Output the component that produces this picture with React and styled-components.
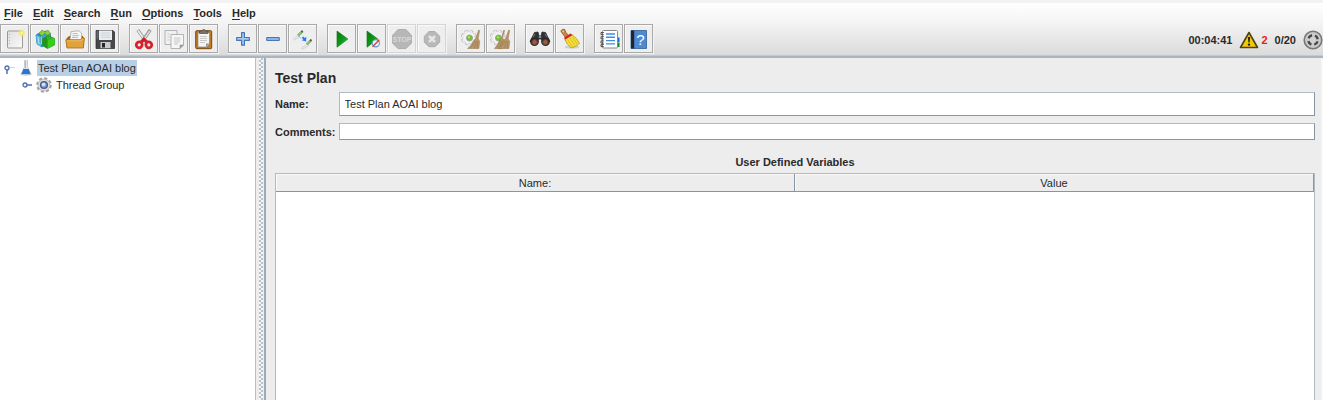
import React, { useState } from "react";
import styled, { createGlobalStyle } from "styled-components";

const menus = ["File", "Edit", "Search", "Run", "Options", "Tools", "Help"];

const NewIcon = () => (
  <svg width="22" height="22" viewBox="0 0 22 22">
    <defs>
      <linearGradient id="sheet" x1="0" y1="0" x2="1" y2="1">
        <stop offset="0" stopColor="#dedede" />
        <stop offset="1" stopColor="#fafafa" />
      </linearGradient>
      <radialGradient id="glow">
        <stop offset="0" stopColor="#fffde0" />
        <stop offset="0.45" stopColor="#f4e85c" />
        <stop offset="1" stopColor="#f4e85c" stopOpacity="0" />
      </radialGradient>
    </defs>
    <rect x="3.5" y="3" width="15" height="17" rx="0.8" fill="url(#sheet)" stroke="#999" />
    <path d="M5.5 6v.8M5.5 9v.8M5.5 12v.8M5.5 15v.8" stroke="#aaa" />
    <circle cx="17.6" cy="5" r="4" fill="url(#glow)" />
  </svg>
);

const TemplatesIcon = () => (
  <svg width="22" height="22" viewBox="0 0 22 22">
    <path d="M2 7 8 3.5 13 6v9l-5 4-5-3z" fill="#2590c2" stroke="#15689a" strokeWidth=".6" />
    <path d="M2 7l5 1.5V19l-4-3z" fill="#56bce0" />
    <path d="M6 6.5 11.5 3l5 2.5V15l-5 3-4-1.5z" fill="#3aa3cb" stroke="#126587" strokeWidth=".6" />
    <path d="M5 5.5 8 2l3 2 3-2 2.5 3.5-3.5 2-2-2.5-3 3z" fill="#8bd33c" stroke="#4f951e" strokeWidth=".6" />
    <path d="M9 11l5-3.5 6.5 3V17l-7 3.5L9 18z" fill="#36b51f" stroke="#168416" strokeWidth=".6" />
    <path d="M13.5 12.5l7-2.5v7l-7 3.5z" fill="#35cf1b" />
    <path d="M8.5 10l4-1 1 3.5v8L8 17z" fill="#22941b" />
    <path d="M4 9l1 7M7 8.5l.5 8" stroke="#c8f0fb" strokeWidth=".8" />
  </svg>
);

const OpenIcon = () => (
  <svg width="22" height="22" viewBox="0 0 22 22">
    <path d="M2.5 10.5 5 8h14l1 3v8H2.5z" fill="#9b661c" />
    <path d="M6 11 7.2 3.5 15 2.8l2.6 2.4V12H6z" fill="#f7f7f7" stroke="#999" strokeWidth=".7" />
    <path d="M8.5 5.8l5-.4M8.3 7.8l6.5-.4M8 9.6l6-.3" stroke="#aaa" strokeWidth=".8" />
    <path d="M1.8 11.8h14.8l1.2-1.7h2.7L19.3 20H3z" fill="#e2a23b" stroke="#a76b18" strokeWidth=".8" />
    <path d="M3 12.8h14l1.2-1.6h1" stroke="#f6c66b" fill="none" strokeWidth=".8" />
  </svg>
);

const SaveIcon = () => (
  <svg width="22" height="22" viewBox="0 0 22 22">
    <path d="M2 2.5h17l1.5 1.5v16.5H2z" fill="#45474a" stroke="#242628" strokeWidth=".7" />
    <rect x="5" y="2.5" width="13" height="9.5" fill="#e9edf0" />
    <path d="M7 5h9M7 7.2h9M7 9.4h9" stroke="#c6cdd4" strokeWidth=".8" />
    <path d="M2.5 3v9l2-2V3z" fill="#64686d" />
    <rect x="6.5" y="14" width="10" height="6.2" fill="#cacaca" />
    <rect x="8" y="15" width="3" height="4.5" fill="#272727" />
  </svg>
);

const CutIcon = () => (
  <svg width="22" height="22" viewBox="0 0 22 22" fill="none">
    <path d="M4.8 2 13.4 14.4" stroke="#999" strokeWidth="3.2" />
    <path d="M5 2.6 13.2 14.2" stroke="#eeeeee" strokeWidth="1.7" />
    <path d="M17.2 2 8.6 14.4" stroke="#888" strokeWidth="3.2" />
    <path d="M16.9 2.8 8.8 14.2" stroke="#dadada" strokeWidth="1.7" />
    <path d="m7.6 14.5 3.4-3.2 3.4 3.2" stroke="#cf1c28" strokeWidth="3" />
    <ellipse cx="6.2" cy="16.8" rx="2.9" ry="3" transform="rotate(25 6.2 16.8)" stroke="#d8202b" strokeWidth="2.8" />
    <ellipse cx="15.8" cy="16.8" rx="2.9" ry="3" transform="rotate(-25 15.8 16.8)" stroke="#d8202b" strokeWidth="2.8" />
  </svg>
);

const CopyIcon = () => (
  <svg width="22" height="22" viewBox="0 0 22 22">
    <g stroke="#a3a3a3" strokeWidth=".8">
      <path d="M2 2.5h12v14H2z" fill="#f0f0f0" />
      <path d="M8 6.5h12.5V17L17 20.5H8z" fill="#f6f6f6" />
      <path d="M20.5 17H17v3.5z" fill="#999" />
    </g>
    <path d="M4.5 6h2M4.5 9h2M4.5 12h2M11 10h6.5M11 12h6.5M11 14h6M11 16h4" stroke="#bcbcbc" strokeWidth=".8" />
  </svg>
);

const PasteIcon = () => (
  <svg width="22" height="22" viewBox="0 0 22 22">
    <rect x="2.7" y="2.7" width="16" height="18" rx="1" fill="#bd7b24" stroke="#784910" />
    <path d="M5 4.5h11.5V16l-3 3H5z" fill="#f4f4f2" stroke="#8e775b" strokeWidth=".6" />
    <path d="M16.5 15.5h-3.5V19z" fill="#999" />
    <path d="M7 8.5h7M7 10.5h7M7 12.5h7M7 14.5h5" stroke="#bbb" strokeWidth=".8" />
    <path d="M6.5 5.5V3.2h2.3C9 1 12.5 1 12.7 3.2H15v2.3z" fill="#757570" stroke="#4b4b48" strokeWidth=".7" />
  </svg>
);

const PlusIcon = () => (
  <svg width="22" height="22" viewBox="0 0 22 22">
    <path d="M9.6 4.7h2.8v4.8h4.9v2.9h-4.9v4.8H9.6v-4.8H4.7V9.5h4.9z" fill="#a8c9ec" stroke="#4677b9" strokeWidth="1.2" strokeLinejoin="round" />
  </svg>
);

const MinusIcon = () => (
  <svg width="22" height="22" viewBox="0 0 22 22">
    <rect x="4.7" y="9.6" width="12.6" height="2.8" rx=".5" fill="#a8c9ec" stroke="#4677b9" strokeWidth="1.1" />
  </svg>
);

const ToggleIcon = () => (
  <svg width="22" height="22" viewBox="0 0 22 22">
    <path d="M1.5 11 6.5 7 8 8.3l-5.5 4zM9.5 20l6-4 1.5 1.4-6.8 4z" fill="#e9e9e9" stroke="#cbcbcb" strokeWidth=".7" />
    <path d="m5.5 6.5 4.2-3.7L11 4.2l-4 4zM14.3 15.3l4.2-3.8 1.3 1.4-4 4z" fill="#8cc475" stroke="#6f9a66" strokeWidth=".6" />
    <path d="m8.7 3.5 1.6-1.2 1.1 1.2-1.6 1.3zM17.4 12.3l1.6-1.2 1.1 1.2-1.6 1.3z" fill="#4d6247" />
    <path d="m6.5 8.7 3.4 2" stroke="#7faeea" strokeDasharray="1 1" />
    <path d="m14.3 8.7-.2 4.8-4.4-1.3 1.7-.9-1.7-1.4 1.4-1.3 1.7 1.5z" fill="#267af0" />
  </svg>
);

const StartIcon = ({ noTimers }) => (
  <svg width="22" height="22" viewBox="0 0 22 22">
    <defs>
      <linearGradient id="play" x1="0" y1="0" x2="1" y2="1">
        <stop offset="0" stopColor="#0a7310" />
        <stop offset=".55" stopColor="#0c9d16" />
        <stop offset="1" stopColor="#38d52c" />
      </linearGradient>
    </defs>
    <path d="M6 3v16.2L16.8 11z" fill="url(#play)" stroke="#167b20" strokeWidth=".7" />
    {noTimers && (
      <g>
        <circle cx="14.8" cy="15.3" r="3.6" fill="#eef5fb" stroke="#6298ca" strokeWidth="1.1" />
        <path d="m11.6 18.8 6.7-7" stroke="#db3b35" strokeWidth="1.3" />
      </g>
    )}
  </svg>
);

const StopIcon = () => (
  <svg width="22" height="22" viewBox="0 0 22 22">
    <path d="M7 1.6h8l5.4 5.6v8L15 20.6H7l-5.4-5.4v-8z" fill="#b7b7b7" stroke="#acacac" />
    <text x="11" y="14" textAnchor="middle" fill="#d8d8d8" fontFamily="Liberation Sans, sans-serif" fontSize="7" fontWeight="700">STOP</text>
  </svg>
);

const ShutdownIcon = () => (
  <svg width="22" height="22" viewBox="0 0 22 22">
    <path d="M8 3.5h6l4.7 4.7v6L14 18.7H8l-4.7-4.5v-6z" fill="#b8b8b8" stroke="#adadad" />
    <path d="m8 8 6 6m0-6-6 6" stroke="#e5e5e5" strokeWidth="2.6" />
  </svg>
);

const CogSweep = ({ all }) => (
  <svg width="22" height="22" viewBox="0 0 22 22">
    <g transform={all ? "translate(-1 0)" : undefined}>
      <circle cx="8.8" cy="9.5" r="6.4" fill="none" stroke="#bdbdbd" strokeWidth="3" strokeDasharray="3.2 1.83" />
      <circle cx="8.8" cy="9.5" r="6.2" fill="#f2f2f2" stroke="#cdcdcd" strokeWidth=".8" />
      <circle cx="8.8" cy="9.5" r="6.2" fill="none" stroke="#ececec" strokeWidth="2" strokeDasharray="2.4 2.47" />
      <circle cx="9.5" cy="10" r="3" fill="#6fc52f" stroke="#9c9c9c" strokeWidth=".9" />
      <circle cx="9" cy="9.2" r="1" fill="#b8ea7c" />
    </g>
    {all && <path d="m13.8 2 .8.6-2.1 7 1.7 3-2 8H4.5q3.5-4 5-8l2-2.2z" fill="#b8976a" stroke="#947549" strokeWidth=".5" />}
    <path d="m18.7 2 .9.5-1.4 8 1.5 3-.8 7H7.6q4.4-3.2 5.9-7.8l2.3-2.4z" fill="#b8976a" stroke="#947549" strokeWidth=".5" />
    <path d="m15.4 12.5-4.5 7m5.8-6.5-2.6 7.3m3.6-7-.7 7.2" stroke="#967a50" strokeWidth=".6" />
    {all && <path d="m10.6 12-3.9 7.5m5.2-7-2.3 7" stroke="#967a50" strokeWidth=".6" />}
  </svg>
);

const SearchIcon = () => (
  <svg width="22" height="22" viewBox="0 0 22 22">
    <path d="M5.5 4.5 9 4l1 4h2l1-4 3.5.5 4.5 9H14l-2-2.5h-2L8 13.5H1z" fill="#303235" stroke="#1d1e20" strokeWidth=".7" />
    <path d="M4 9.5 6 6m10 0 2 3.5" stroke="#77797d" />
    <circle cx="5.5" cy="13.6" r="4.4" fill="#292b2d" />
    <circle cx="16.5" cy="13.6" r="4.4" fill="#292b2d" />
    <circle cx="5.6" cy="14.2" r="2.7" fill="#a0583e" stroke="#5c4138" />
    <circle cx="16.4" cy="14.2" r="2.7" fill="#a0583e" stroke="#5c4138" />
    <circle cx="11" cy="9" r="1.3" fill="#8c8e90" />
  </svg>
);

const ResetIcon = () => (
  <svg width="22" height="22" viewBox="0 0 22 22">
    <ellipse cx="13" cy="19" rx="7.5" ry="1.6" fill="#cfcfcf" />
    <path d="M1.8 3Q3 .6 5.5 1.3L7 4.5l3 3.5-3 2.3-3-4z" fill="#c88742" stroke="#8b5721" strokeWidth=".8" />
    <circle cx="4.2" cy="3.4" r=".9" fill="#f2c58a" />
    <path d="m5.8 11.5 7.5-4.6q5 3.2 7.2 8.6-3.2 3.4-8.4 4.4-4.1-3-6.3-8.4z" fill="#f5df39" stroke="#ab8d16" strokeWidth=".7" />
    <path d="m5 9.8 6.4-4.3 2.2 1.4-7.5 4.7z" fill="#d52422" />
    <path d="m8.5 11.5 4.5 7m-2-8.5 4.8 7.6M13.4 9l4.6 7" stroke="#cdae23" strokeWidth=".7" />
  </svg>
);

const FunctionHelperIcon = () => (
  <svg width="22" height="22" viewBox="0 0 22 22">
    <path d="M19.5 9.5h2v4.5h-2z" fill="#126bd7" />
    <path d="M19.5 14.5h2V19h-2z" fill="#178538" />
    <rect x="4.5" y="2.5" width="15" height="17.5" rx="1" fill="#fff" stroke="#888" />
    <path d="M8 6h9M8 9.3h9M8 12.6h9M8 15.9h9" stroke="#3f8ce4" strokeWidth="1.4" />
    <path d="M5.8 4.5H3v2.2h2.8m0 2H3v2.2h2.8m0 2H3v2.2h2.8m0 1.5H3v2h2.8" stroke="#4d4d4d" fill="none" strokeWidth="1" />
  </svg>
);

const HelpIcon = () => (
  <svg width="22" height="22" viewBox="0 0 22 22">
    <path d="M3 2.5h15.5v18H3z" fill="#4c8bd3" stroke="#315f9a" strokeWidth=".8" />
    <path d="M3 2.5h3.2v18H3z" fill="#20262d" />
    <text x="12.3" y="16.8" textAnchor="middle" fill="#fff" fontFamily="Liberation Sans, sans-serif" fontSize="15">?</text>
  </svg>
);

const WarningIcon = () => (
  <svg width="20" height="18" viewBox="0 0 20 18">
    <path d="M10 1.5 18.5 16.5h-17z" fill="#f5c908" stroke="#4b4319" strokeWidth="1.6" strokeLinejoin="round" />
    <path d="M8.9 6h2.2l-.5 5.4H9.4z" fill="#222" />
    <circle cx="10" cy="13.6" r="1.2" fill="#222" />
  </svg>
);

const RunningIcon = () => (
  <svg width="20" height="20" viewBox="0 0 20 20">
    <circle cx="10" cy="10" r="8.8" fill="#b6b6b6" stroke="#777" strokeWidth="1.6" />
    <circle cx="10" cy="10" r="7.6" fill="#cccccc" />
    <circle cx="10" cy="10" r="4.8" fill="none" stroke="#484848" strokeWidth="2.4" strokeDasharray="4.5 3.04" strokeDashoffset="-1.5" />
    <circle cx="10" cy="10" r="3" fill="#d2d2d2" />
  </svg>
);

const Handle = ({ open }) => (
  <svg width="12" height="14" viewBox="0 0 12 14" fill="none">
    {open ? (
      <path d="M3 8v5" stroke="#5b7cb8" strokeWidth="1.6" />
    ) : (
      <path d="M5 7h5" stroke="#5b7cb8" strokeWidth="1.6" />
    )}
    {open && <path d="M6 6.5h5" stroke="#cbd8ea" />}
    <circle cx="3" cy="7" r="2" fill="#eaf2fc" stroke="#4d70b0" strokeWidth="1.3" />
  </svg>
);

const FlaskIcon = () => (
  <svg width="16" height="16" viewBox="0 0 16 16">
    <ellipse cx="8" cy="14.5" rx="5.8" ry="1.2" fill="#bcd2e8" />
    <path d="M6.5 0v6.5L3.2 14h9.6L9.5 6.5V0z" fill="#e3eaf1" stroke="#b9c4d0" strokeWidth=".8" />
    <path d="m5.4 9-2 5h9.2l-2-5z" fill="#2c76cf" />
    <path d="M7.4 1v7.5" stroke="#a2b4c6" />
  </svg>
);

const GearIcon = () => (
  <svg width="16" height="16" viewBox="0 0 16 16">
    <circle cx="8" cy="8" r="6.6" fill="none" stroke="#a2a2a2" strokeWidth="2.4" strokeDasharray="3 2.18" />
    <circle cx="8" cy="8" r="6" fill="#dedede" stroke="#aaa" strokeWidth=".7" />
    <circle cx="8" cy="8" r="3.4" fill="#7c9cd2" stroke="#4a5c86" strokeWidth="1.3" />
    <circle cx="7.5" cy="7.5" r="1.8" fill="#d3e4fa" />
  </svg>
);

const toolGroups = [
  [
    { label: "New", icon: <NewIcon /> },
    { label: "Templates", icon: <TemplatesIcon /> },
    { label: "Open", icon: <OpenIcon /> },
    { label: "Save", icon: <SaveIcon /> },
  ],
  [
    { label: "Cut", icon: <CutIcon /> },
    { label: "Copy", icon: <CopyIcon /> },
    { label: "Paste", icon: <PasteIcon /> },
  ],
  [
    { label: "Expand All", icon: <PlusIcon /> },
    { label: "Collapse All", icon: <MinusIcon /> },
    { label: "Toggle", icon: <ToggleIcon /> },
  ],
  [
    { label: "Start", icon: <StartIcon /> },
    { label: "Start no pauses", icon: <StartIcon noTimers /> },
    { label: "Stop", icon: <StopIcon />, disabled: true },
    { label: "Shutdown", icon: <ShutdownIcon />, disabled: true },
  ],
  [
    { label: "Clear", icon: <CogSweep /> },
    { label: "Clear All", icon: <CogSweep all /> },
  ],
  [
    { label: "Search", icon: <SearchIcon /> },
    { label: "Reset Search", icon: <ResetIcon /> },
  ],
  [
    { label: "Function Helper", icon: <FunctionHelperIcon /> },
    { label: "Help", icon: <HelpIcon /> },
  ],
];

const App = () => {
  const [name, setName] = useState("Test Plan AOAI blog");
  const [comments, setComments] = useState("");

  return (
    <Window>
      <GlobalStyle />
      <Header>
        <MenuBar>
          {menus.map((menu) => (
            <MenuButton key={menu} type="button">
              <u>{menu[0]}</u>
              {menu.slice(1)}
            </MenuButton>
          ))}
        </MenuBar>
        <Toolbar>
          {toolGroups.map((group, i) => (
            <ToolGroup key={i}>
              {group.map((tool) => (
                <ToolButton
                  key={tool.label}
                  type="button"
                  aria-label={tool.label}
                  disabled={tool.disabled}
                >
                  {tool.icon}
                </ToolButton>
              ))}
            </ToolGroup>
          ))}
          <Status>
            <span>00:04:41</span>
            <Errors type="button">
              <WarningIcon />2
            </Errors>
            <span>0/20</span>
            <RunningIcon />
          </Status>
        </Toolbar>
      </Header>
      <Main>
        <Tree>
          <TreeRow $level={0}>
            <Handle open />
            <FlaskIcon />
            <TreeLabel $selected>{name}</TreeLabel>
          </TreeRow>
          <TreeRow $level={1}>
            <Handle />
            <GearIcon />
            <TreeLabel>Thread Group</TreeLabel>
          </TreeRow>
        </Tree>
        <Divider />
        <Panel>
          <Title>Test Plan</Title>
          <Fields>
            <Label htmlFor="name">Name:</Label>
            <TextInput
              id="name"
              type="text"
              $height={24}
              value={name}
              onChange={(e) => setName(e.target.value)}
            />
            <Label htmlFor="comments">Comments:</Label>
            <TextInput
              id="comments"
              type="text"
              $height={17}
              value={comments}
              onChange={(e) => setComments(e.target.value)}
            />
          </Fields>
          <TableTitle id="variables">User Defined Variables</TableTitle>
          <TableArea>
            <Table aria-labelledby="variables">
              <thead>
                <tr>
                  <HeadCell>Name:</HeadCell>
                  <HeadCell>Value</HeadCell>
                </tr>
              </thead>
            </Table>
          </TableArea>
        </Panel>
      </Main>
    </Window>
  );
};

export default App;

const GlobalStyle = createGlobalStyle`
  * {
    box-sizing: border-box;
  }
  body {
    margin: 0;
    background: #ededed;
    color: #2a2a2a;
    font: 11px/16px "Liberation Sans", Arial, sans-serif;
  }
  button, input {
    font: inherit;
    color: inherit;
  }
  svg {
    display: block;
    flex-shrink: 0;
  }
`;

const Window = styled.div`
  display: flex;
  flex-direction: column;
  min-height: 100vh;
`;

const Header = styled.header`
  border-top: 3px solid #f2f2f2;
  border-bottom: 2px solid #abb5c0;
  background: linear-gradient(#ffffff, #f3f3f3 40%, #dadada);
`;

const MenuBar = styled.nav`
  display: flex;
  gap: 10px;
  height: 21px;
  padding: 1px 4px;
`;

const MenuButton = styled.button`
  height: 18px;
  padding: 0;
  border: 0;
  background: none;
  font-weight: bold;

  u {
    text-underline-offset: 2px;
  }
`;

const Toolbar = styled.div`
  display: flex;
  gap: 9px;
  height: 32px;
  border-bottom: 1px solid #c9c9c9;
`;

const ToolGroup = styled.div`
  display: flex;
  gap: 1px;
  padding-right: 1px;
  height: 30px;
  background: #f4f4f4;
`;

const ToolButton = styled.button`
  display: flex;
  align-items: center;
  justify-content: center;
  width: 29px;
  height: 29px;
  padding: 0;
  border: 1px solid ${(props) => (props.disabled ? "#d4d4d4" : "#a9a9a9")};
  background: #eeeeee;
  box-shadow: inset 1px 1px #fafafa;
`;

const Status = styled.div`
  display: flex;
  align-items: center;
  gap: 7px;
  height: 32px;
  margin-left: auto;
  font-weight: bold;
`;

const Errors = styled.button`
  display: flex;
  align-items: center;
  gap: 2px;
  padding: 0;
  border: 0;
  background: none;
  color: #f01818;
`;

const Main = styled.main`
  display: flex;
  flex: 1;
`;

const Tree = styled.div`
  width: 256px;
  flex-shrink: 0;
  padding-top: 1px;
  border-right: 1px solid #b4c0cd;
  background: #ffffff;
`;

const TreeRow = styled.div`
  display: flex;
  align-items: center;
  gap: 2px;
  height: 17px;
  padding-left: ${(props) => 4 + props.$level * 18}px;
`;

const TreeLabel = styled.span`
  margin-left: 1px;
  padding: 0 1px;
  line-height: 16px;
  background: ${(props) => (props.$selected ? "#b8cfe5" : "none")};
`;

const Divider = styled.div`
  width: 8px;
  flex-shrink: 0;
  border: solid #ededed;
  border-width: 0 1px 0 3px;
  background: conic-gradient(#b9c2cb 25%, #f4f4f4 0 50%, #b9c2cb 0 75%, #f4f4f4 0)
    0 0 / 4px 4px;
`;

const Panel = styled.section`
  display: flex;
  flex: 1;
  flex-direction: column;
  min-width: 0;
  padding: 10px 6px 0 9px;
  border-left: 2px solid #9dabb9;
  border-right: 2px solid #f8f8f8;
`;

const Title = styled.h1`
  margin: 0 0 4px;
  font-size: 14px;
  line-height: 20px;
`;

const Fields = styled.div`
  display: grid;
  grid-template-columns: auto 1fr;
  align-items: center;
  gap: 7px 3px;
`;

const Label = styled.label`
  font-weight: bold;
`;

const TextInput = styled.input`
  width: 100%;
  height: ${(props) => props.$height}px;
  padding: 0 5px;
  border: 1px solid #8796a5;
  border-top-color: #b0bac5;
  border-left-color: #b0bac5;
  background: #ffffff;
  outline: none;
`;

const TableTitle = styled.h2`
  margin: 14px 0 3px;
  font-size: 11px;
  line-height: 16px;
  text-align: center;
`;

const TableArea = styled.div`
  flex: 1;
  border: 1px solid #b0bac5;
  border-bottom: 0;
  background: #ffffff;
`;

const Table = styled.table`
  width: 100%;
  table-layout: fixed;
  border-collapse: separate;
  border-spacing: 0;
`;

const HeadCell = styled.th`
  height: 18px;
  padding: 1px 0 0;
  border-right: 1px solid #8796a5;
  border-bottom: 1px solid #8796a5;
  background: #ededed;
  box-shadow: inset 1px 1px #fafafa;
  font-weight: normal;
`;
